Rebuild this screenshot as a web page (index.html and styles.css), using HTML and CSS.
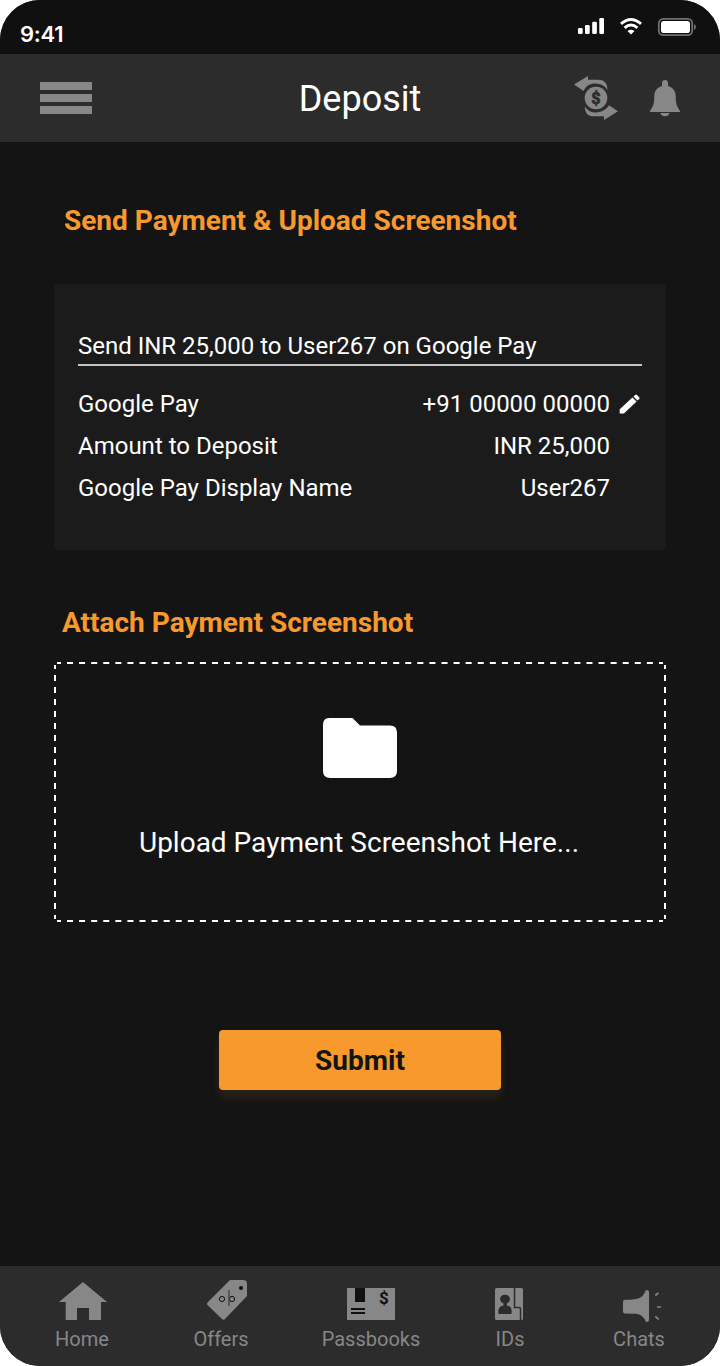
FILE: index.html
```html
<!DOCTYPE html>
<html lang="en">
<head>
<meta charset="utf-8">
<title>Deposit</title>
<link rel="stylesheet" href="styles.css">
</head>
<body>
<div class="phone">
  <div class="status">
    <span class="time">9:41</span>
    <svg class="status-icons" width="120" height="22" viewBox="576 16 120 22">
      <g fill="#fff"><rect x="578" y="28" width="4.7" height="6" rx="1.3"/><rect x="585" y="25" width="4.7" height="9" rx="1.3"/><rect x="592.2" y="21.7" width="4.7" height="12.3" rx="1.3"/><rect x="599.3" y="18" width="4.7" height="16" rx="1.3"/></g>
      <g fill="none" stroke="#fff" stroke-width="3"><path d="M621 23.8Q631 15.2 641 23.8"/><path d="M624.6 27.8Q631 22.2 637.4 27.8"/></g>
      <path d="M627.5 31Q631 28.3 634.5 31L631 34.4Z" fill="#fff"/>
      <rect x="658.8" y="18.8" width="33.4" height="16.4" rx="4.5" fill="none" stroke="#707070" stroke-width="1.8"/>
      <rect x="661" y="21" width="29" height="12" rx="2.8" fill="#fff"/>
      <path d="M694 24Q696 25 696 27T694 30Z" fill="#707070"/>
    </svg>
  </div>
  <header class="header">
    <div class="menu"><i></i><i></i><i></i></div>
    <h1 class="title">Deposit</h1>
    <div class="actions">
      <svg width="45" height="46" viewBox="574 75 45 46" fill="#878787">
        <path d="M574 84.6 588 76V79.8H598C604 79.8 607.4 83 607.4 89.8Q603 83.6 595.6 83.6C589.6 83.6 586 86 583.6 91Z"/>
        <path d="M618 111.2 604 120V116.2H594C588 116.2 584.8 113 584.8 106.4Q588.4 112.4 595.8 112.4C602 112.4 606.6 109.4 609 105.3Z"/>
        <circle cx="596" cy="98" r="11.3"/>
        <text class="coin" x="596" y="103.6" text-anchor="middle">$</text>
      </svg>
      <svg width="30" height="37" viewBox="650 80 30 37" fill="#878787">
        <path d="M662 86V83A3 3 0 0 1 668 83V86C673 87.5 675.7 91 675.7 96C675.7 105 677.5 107 680 111V112H650V111C652.5 107 654.3 105 654.3 96C654.3 91 657 87.5 662 86Z"/>
        <path d="M660.3 113H669.7Q668.5 116.2 665 116.2T660.3 113Z"/>
      </svg>
    </div>
  </header>
  <main class="content">
    <h2 class="heading">Send Payment &amp; Upload Screenshot</h2>
    <section class="card">
      <p class="lead">Send INR 25,000 to User267 on Google Pay</p>
      <div class="row"><span>Google Pay</span><span class="value">+91 00000 00000</span>
        <svg class="edit" width="21" height="20" viewBox="619 393 21 20" fill="#fff"><path d="M619.7 408.3 632.4 396.4 636.6 400.6 623.9 412.5H619.7Z"/><path d="M633.4 395.5 635.2 393.9Q636.1 393.1 637 394L639.2 396.2Q640.1 397 639.2 397.9L637.5 399.6Z"/></svg>
      </div>
      <div class="row"><span>Amount to Deposit</span><span class="value">INR 25,000</span></div>
      <div class="row"><span>Google Pay Display Name</span><span class="value">User267</span></div>
    </section>
    <h2 class="heading attach">Attach Payment Screenshot</h2>
    <section class="upload">
      <svg class="outline" width="612" height="260" viewBox="0 0 612 260" fill="none" stroke="#fff" stroke-width="2">
        <path d="M1 13V252" stroke-dasharray="6 6"/><path d="M611 13V252" stroke-dasharray="6 6"/>
        <path d="M13 1H602" stroke-dasharray="6.04 6.04"/><path d="M13 259H602" stroke-dasharray="6.04 6.04"/>
        <path d="M3 1H7M1 3V7M605 1H609M611 3V7M1 253V257M3 259H7M605 259H609M611 253V257"/>
      </svg>
      <svg width="74" height="60" viewBox="0 0 74 60" fill="#fff"><path d="M6 0H29.5L37 7.5H67Q74 7.5 74 14.5V53Q74 60 67 60H7Q0 60 0 53V7Q0 0 6 0Z"/></svg>
      <p class="hint">Upload Payment Screenshot Here...</p>
    </section>
    <button class="submit">Submit</button>
  </main>
  <nav class="nav">
    <a class="tab home"><svg width="48" height="40" viewBox="59 1280 48 40" fill="#878787"><path d="M59 1302 83 1282 107 1302H101V1320H89V1308H77V1320H65.7V1302Z"/></svg><span>Home</span></a>
    <a class="tab offers"><svg width="40" height="40" viewBox="207 1280 40 40" fill="#878787"><path d="M230 1280H243Q247 1280 247 1284V1296L225.5 1318.5Q223.5 1321 221.5 1318.5L208 1305.5Q206 1303.8 208 1302Z"/><circle cx="241" cy="1288" r="2.1" fill="#111"/><g fill="none" stroke="#111"><circle cx="222" cy="1299" r="2.6"/><circle cx="232" cy="1299" r="2.6"/><path d="M229 1290V1306" stroke="#444" stroke-width="1.4"/></g></svg><span>Offers</span></a>
    <a class="tab pass"><svg width="48" height="40" viewBox="347 1280 48 40"><path d="M347 1288H395V1320H347Z" fill="#878787"/><path d="M355 1288H365V1302H355ZM351 1308H365V1310H351ZM351 1312H365V1314H351Z" fill="#111"/><text class="dollar" x="384" y="1304" text-anchor="middle">$</text></svg><span>Passbooks</span></a>
    <a class="tab ids"><svg width="28" height="40" viewBox="495 1280 28 40"><rect x="495" y="1288" width="28" height="32" rx="1.5" fill="#878787"/><path d="M514.5 1288V1307.5H519Q520.5 1307.5 520.5 1309V1320" fill="none" stroke="#2c2c2c" stroke-width="1.5"/><path d="M498.3 1313C498.3 1307 500 1306.5 503.5 1305.5V1303.5Q500.5 1302.5 500 1299.5Q500.2 1295 505 1294.8Q509.8 1295 510 1299.5Q509.5 1302.5 506.8 1303.5V1305.5C510.5 1306.5 511.7 1307 511.7 1313Q511.7 1314 510.5 1314H499.5Q498.3 1314 498.3 1313Z" fill="#2c2c2c"/></svg><span>IDs</span></a>
    <a class="tab chats"><svg width="40" height="40" viewBox="622 1280 40 40" fill="#878787"><path d="M625 1299.8C637 1299.5 642 1299 645 1292Q645.3 1290 647 1290T649 1292V1320Q649 1322 647 1322T645.2 1320C642 1315 639 1314 634 1313.8L625 1313.5Q623 1313.5 623 1311.5V1302Q623 1299.8 625 1299.8Z"/><path d="M655.3 1295.5 658.5 1292.8M657 1307H661M655.3 1316.5 658.8 1319.3" fill="none" stroke="#878787" stroke-width="1.7"/></svg><span>Chats</span></a>
  </nav>
</div>
</body>
</html>
```
FILE: styles.css
```css
* { box-sizing: border-box; }
body { margin: 0; background: #fff; font-family: Roboto, sans-serif; }
h1, h2, p { margin: 0; font-weight: 400; }
.phone { width: 720px; height: 1366px; display: flex; flex-direction: column; overflow: hidden; border-radius: 40px; background: #141414; color: #fff; }
.status { height: 54px; flex: none; display: flex; justify-content: space-between; padding: 16px 24px 0 20px; background: #101010; }
.time { font: 600 22px/36px Inter, sans-serif; letter-spacing: -0.3px; }
.header { height: 88px; flex: none; display: grid; grid-template-columns: 1fr auto 1fr; align-items: center; padding: 0 40px; background: #2c2c2c; }
.menu { width: 52px; display: flex; flex-direction: column; gap: 4px; }
.menu i { height: 8px; background: #878787; }
.title { font-size: 36px; line-height: 44px; padding-top: 2px; }
.actions { display: flex; justify-content: flex-end; align-items: center; gap: 31px; }
.coin { font: 900 16px Roboto, sans-serif; fill: #2c2c2c; stroke: #2c2c2c; stroke-width: 0.6px; }
.content { flex: 1; display: flex; flex-direction: column; padding: 62px 54px 0; }
.heading { font-size: 28px; line-height: 34px; font-weight: 700; color: #f8992d; padding-left: 10px; }
.card { height: 266px; margin-top: 46px; padding: 44px 24px 0; border-radius: 4px; background: #1b1b1b; font-size: 24px; }
.lead { line-height: 36px; height: 38px; border-bottom: 2px solid #c4c4c4; margin-bottom: 17px; }
.row { height: 42px; line-height: 42px; display: grid; grid-template-columns: 1fr auto 32px; align-items: center; }
.edit { margin: -1px 0 0 9px; }
.attach { margin-top: 56px; padding-left: 8px; }
.upload { position: relative; height: 260px; margin-top: 22px; padding-top: 56px; display: flex; flex-direction: column; align-items: center; }
.outline { position: absolute; inset: 0; }
.hint { margin-top: 48px; font-size: 28px; line-height: 34px; padding-right: 2px; }
.submit { align-self: center; width: 282px; height: 60px; margin-top: 108px; padding: 0; border: 0; border-radius: 4px; background: #f8992d; box-shadow: 0 8px 8px rgba(248, 153, 45, .1); font: 700 28px Roboto, sans-serif; color: #141414; }
.nav { height: 100px; flex: none; display: flex; background: #2c2c2c; color: #878787; font-size: 20px; padding: 14px 0 0 55px; }
.tab { display: flex; flex-direction: column; align-items: center; flex: none; }
.tab svg { overflow: visible; }
.tab span { line-height: 24px; margin-top: 7px; }
.home { width: 54px; }
.home svg { margin-left: 2px; }
.offers { width: 56px; margin-left: 84px; }
.offers svg { margin-left: 12px; }
.pass { width: 98px; margin-left: 73px; }
.ids { width: 30px; margin-left: 74px; }
.ids span { padding-left: 2px; }
.chats { width: 52px; margin-left: 89px; }
.chats svg { margin-left: 6px; }
.dollar { font: 700 17px Roboto, sans-serif; fill: #111; }
```
